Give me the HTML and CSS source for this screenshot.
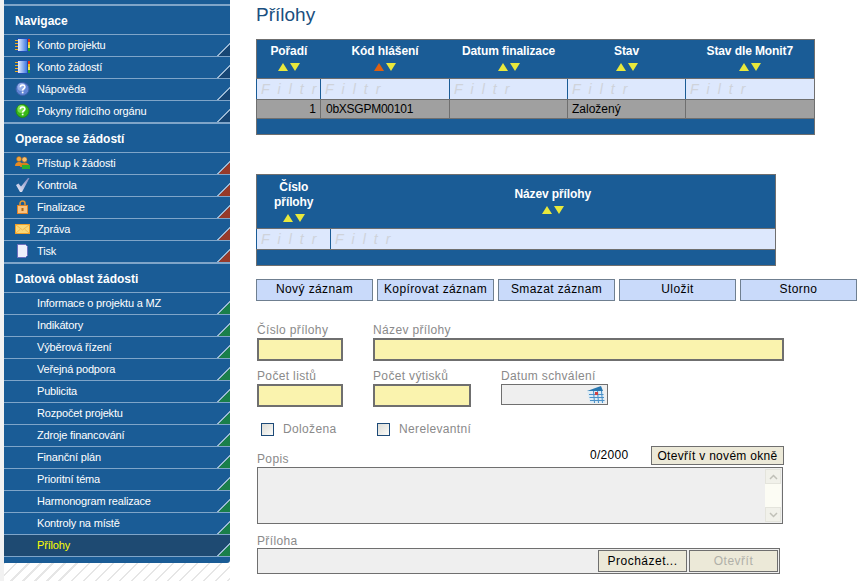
FILE: index.html
```html
<!DOCTYPE html>
<html lang="cs">
<head>
    <meta charset="UTF-8">
    <title>Přílohy</title>
    <link rel="stylesheet" href="styles.css">
</head>
<body>
    <svg class="defs" width="0" height="0">
        <defs>
            <linearGradient id="book-fill" x1="0" y1="0" x2="1" y2="0">
                <stop offset="0" stop-color="#e4edfd"/>
                <stop offset="1" stop-color="#3f78e0"/>
            </linearGradient>
            <linearGradient id="check-fill" x1="0" y1="1" x2="1" y2="0">
                <stop offset="0" stop-color="#eef0fa"/>
                <stop offset="1" stop-color="#7f88c0"/>
            </linearGradient>
        </defs>
        <symbol id="ic-book" viewBox="0 0 15 14">
            <rect x="2" y="0" width="11" height="14" fill="#1f4fb0"/>
            <rect x="3" y="1" width="9" height="12" fill="url(#book-fill)"/>
            <path d="M0 2.500h3M0 5.500h3M0 8.500h3M0 11.500h3" stroke="#f0b020"/>
            <rect x="13" y="1" width="2" height="3" fill="#e03020"/>
            <rect x="13" y="4" width="2" height="3" fill="#f0c020"/>
            <rect x="13" y="7" width="2" height="3" fill="#f0e060"/>
            <rect x="13" y="10" width="2" height="3" fill="#20a030"/>
        </symbol>
        <symbol id="ic-help" viewBox="0 0 15 14">
            <circle cx="7.500" cy="7" r="6.500" fill="#5f84d4" stroke="#3d5fa8"/>
            <circle cx="6.500" cy="5" r="4" fill="#93aee8"/>
            <path d="M5.300 5.200c0-3 4.600-3 4.600-.3 0 1.800-2.300 1.800-2.300 3.600" fill="none" stroke="#fff" stroke-width="1.500"/>
            <rect x="6.800" y="9.600" width="1.700" height="1.700" fill="#fff"/>
        </symbol>
        <symbol id="ic-guide" viewBox="0 0 15 14">
            <circle cx="7.500" cy="7" r="6.500" fill="#38b818" stroke="#238a10"/>
            <circle cx="6.500" cy="5" r="4" fill="#80e050"/>
            <path d="M5.300 5.200c0-3 4.600-3 4.600-.3 0 1.800-2.300 1.800-2.300 3.600" fill="none" stroke="#fff" stroke-width="1.500"/>
            <rect x="6.800" y="9.600" width="1.700" height="1.700" fill="#fff"/>
        </symbol>
        <symbol id="ic-users" viewBox="0 0 15 14">
            <circle cx="4" cy="3" r="2.500" fill="#f4a53a" stroke="#a86010" stroke-width=".5"/>
            <path d="M0 10c0-3 2-4 4-4s4 1 4 4z" fill="#e88a20"/>
            <circle cx="9.500" cy="3.500" r="2.500" fill="#f7c070" stroke="#a86010" stroke-width=".5"/>
            <path d="M5 11c0-3 2-4.500 4.500-4.500S14 8 14 9v2z" fill="#d8801c"/>
            <rect x="7" y="9" width="8" height="4" fill="#28b030"/>
        </symbol>
        <symbol id="ic-check" viewBox="0 0 15 14">
            <path d="M1 7l2.500-1.500L6 8.500 13 0h1.500L7 14H5z" fill="url(#check-fill)"/>
        </symbol>
        <symbol id="ic-lock" viewBox="0 0 15 14">
            <path d="M5 6V3.500a2.500 2.500 0 0 1 5 0V6" fill="none" stroke="#e09838" stroke-width="1.500"/>
            <rect x="2.500" y="5.500" width="10" height="8" fill="#f9c27e" stroke="#e08428"/>
            <rect x="6.500" y="8" width="2" height="3" fill="#b06818"/>
        </symbol>
        <symbol id="ic-mail" viewBox="0 0 15 14">
            <rect x=".5" y="2.500" width="14" height="9" fill="#fbd878" stroke="#f0a028"/>
            <path d="M1 3l6.500 5L14 3M1 11l4.500-4M14 11L9.500 7" fill="none" stroke="#f0b850"/>
        </symbol>
        <symbol id="ic-doc" viewBox="0 0 15 14">
            <path d="M2.500.5h8l2 2v9l-2 2h-8z" fill="#eef0fb" stroke="#6f70c0"/>
        </symbol>
    </svg>

    <div class="page">
        <nav class="side">
            <div class="side-cap"></div>

            <h3 class="side-title">Navigace</h3>
            <a class="side-item tri-blue"><svg class="ic"><use href="#ic-book"/></svg>Konto projektu</a>
            <a class="side-item tri-blue"><svg class="ic"><use href="#ic-book"/></svg>Konto žádostí</a>
            <a class="side-item tri-blue"><svg class="ic"><use href="#ic-help"/></svg>Nápověda</a>
            <a class="side-item tri-blue last"><svg class="ic"><use href="#ic-guide"/></svg>Pokyny řídícího orgánu</a>

            <h3 class="side-title">Operace se žádostí</h3>
            <a class="side-item tri-red"><svg class="ic"><use href="#ic-users"/></svg>Přístup k žádosti</a>
            <a class="side-item tri-red"><svg class="ic"><use href="#ic-check"/></svg>Kontrola</a>
            <a class="side-item tri-red"><svg class="ic"><use href="#ic-lock"/></svg>Finalizace</a>
            <a class="side-item tri-red"><svg class="ic"><use href="#ic-mail"/></svg>Zpráva</a>
            <a class="side-item tri-red last"><svg class="ic"><use href="#ic-doc"/></svg>Tisk</a>

            <h3 class="side-title">Datová oblast žádosti</h3>
            <a class="side-item tri-green plain">Informace o projektu a MZ</a>
            <a class="side-item tri-green plain">Indikátory</a>
            <a class="side-item tri-green plain">Výběrová řízení</a>
            <a class="side-item tri-green plain">Veřejná podpora</a>
            <a class="side-item tri-green plain">Publicita</a>
            <a class="side-item tri-green plain">Rozpočet projektu</a>
            <a class="side-item tri-green plain">Zdroje financování</a>
            <a class="side-item tri-green plain">Finanční plán</a>
            <a class="side-item tri-green plain">Prioritní téma</a>
            <a class="side-item tri-green plain">Harmonogram realizace</a>
            <a class="side-item tri-green plain">Kontroly na místě</a>
            <a class="side-item tri-green plain active">Přílohy</a>
            <div class="side-foot"></div>
        </nav>

        <main class="content">
            <h1 class="title">Přílohy</h1>

            <table class="grid grid-top">
                <colgroup>
                    <col class="c-64"><col class="c-129"><col class="c-118"><col class="c-118"><col>
                </colgroup>
                <tr class="head">
                    <th>Pořadí<div class="sort"><i class="up"></i><i class="down"></i></div></th>
                    <th>Kód hlášení<div class="sort"><i class="up on"></i><i class="down"></i></div></th>
                    <th>Datum finalizace<div class="sort"><i class="up"></i><i class="down"></i></div></th>
                    <th>Stav<div class="sort"><i class="up"></i><i class="down"></i></div></th>
                    <th>Stav dle Monit7<div class="sort"><i class="up"></i><i class="down"></i></div></th>
                </tr>
                <tr class="filter">
                    <td>Filtr</td><td>Filtr</td><td>Filtr</td><td>Filtr</td><td>Filtr</td>
                </tr>
                <tr class="row">
                    <td class="num">1</td><td class="code">0bXSGPM00101</td><td></td><td>Založený</td><td></td>
                </tr>
                <tr class="foot"><td colspan="5"></td></tr>
            </table>

            <table class="grid grid-bottom">
                <colgroup>
                    <col class="c-74"><col>
                </colgroup>
                <tr class="head head-tall">
                    <th>Číslo<br>přílohy<div class="sort"><i class="up"></i><i class="down"></i></div></th>
                    <th>Název přílohy<div class="sort"><i class="up"></i><i class="down"></i></div></th>
                </tr>
                <tr class="filter">
                    <td>Filtr</td><td>Filtr</td>
                </tr>
                <tr class="foot"><td colspan="2"></td></tr>
            </table>

            <div class="actions">
                <button class="btn">Nový záznam</button>
                <button class="btn">Kopírovat záznam</button>
                <button class="btn">Smazat záznam</button>
                <button class="btn">Uložit</button>
                <button class="btn">Storno</button>
            </div>

            <div class="form">
                <div class="form-row row-one">
                    <div class="field"><label>Číslo přílohy</label><div class="inp req w-86"></div></div>
                    <div class="field"><label>Název přílohy</label><div class="inp req w-411"></div></div>
                </div>
                <div class="form-row row-two">
                    <div class="field"><label>Počet listů</label><div class="inp req w-86"></div></div>
                    <div class="field"><label>Počet výtisků</label><div class="inp req w-98"></div></div>
                    <div class="field">
                        <label>Datum schválení</label>
                        <div class="inp date">
                            <svg class="cal" viewBox="0 0 20 18">
                                <path d="M1 5l14-5 2 5z" fill="#2a78b0"/>
                                <path d="M1 5h16l2 12H4z" fill="#dcebf5"/>
                                <path d="M3 8.500h14.500M3.500 11.500h14.500M4 14.500h14.500M7.500 5l1 12M11.500 5l1 12M15.500 5l1 12" stroke="#4a90c8"/>
                                <rect x="9" y="6" width="3" height="3" fill="#d04040"/>
                            </svg>
                        </div>
                    </div>
                </div>
                <div class="checks">
                    <label class="check w-116"><span class="box"></span>Doložena</label>
                    <label class="check"><span class="box"></span>Nerelevantní</label>
                </div>
                <div class="popis-head">
                    <label class="popis-label">Popis</label>
                    <span class="count">0/2000</span>
                    <button class="btn-sm">Otevřít v novém okně</button>
                </div>
                <div class="area">
                    <div class="scroll">
                        <span class="sc-btn"><svg width="9" height="6" viewBox="0 0 9 6"><path d="M1 5l3.500-3.500L8 5" fill="none" stroke="#c0c0b8" stroke-width="1.500"/></svg></span>
                        <span class="sc-btn"><svg width="9" height="6" viewBox="0 0 9 6"><path d="M1 1l3.500 3.500L8 1" fill="none" stroke="#c0c0b8" stroke-width="1.500"/></svg></span>
                    </div>
                </div>
                <label class="file-label">Příloha</label>
                <div class="file">
                    <button class="btn-file">Procházet...</button>
                    <button class="btn-file off">Otevřít</button>
                </div>
            </div>
        </main>
    </div>
</body>
</html>
```

FILE: styles.css
```css
body {
    margin: 0;
    font-family: "Liberation Sans", Arial, sans-serif;
    font-size: 12px;
    background: #fff;
    color: #000;
}
.defs {
    display: block;
    height: 0;
}
.page {
    display: flex;
    align-items: stretch;
    height: 581px;
    overflow: hidden;
}

/* left menu */
.side {
    width: 226px;
    flex-shrink: 0;
    border-left: 4px solid #f2f2f2;
    background: repeating-linear-gradient(135deg, #fff 0, #fff 7px, #e6e6e6 7px, #e6e6e6 8.500px);
}
.side-cap {
    height: 4px;
    background: #1a5c96;
    border-bottom: 2px solid #7fa5c9;
}
.side-title {
    margin: 0;
    height: 28px;
    line-height: 30px;
    padding-left: 11px;
    background: #1a5c96;
    color: #fff;
    font-size: 12px;
    font-weight: bold;
    border-bottom: 1px solid #7fa5c9;
}
.side-item {
    display: flex;
    align-items: center;
    box-sizing: content-box;
    height: 19px;
    padding: 0 0 2px 11px;
    color: #fff;
    font-size: 11px;
    letter-spacing: -.17px;
    border-bottom: 1px solid #7fa5c9;
    background-color: #1a5c96;
    background-repeat: no-repeat;
    background-position: right bottom;
    background-size: 13px 13px;
}
.side-item.plain {
    padding-left: 33px;
}
.side-item.last {
    border-bottom-width: 2px;
}
.side-item.active {
    background-color: #1e4a72;
    color: #ffff00;
}
.tri-blue {
    background-image: linear-gradient(135deg, transparent 48%, #9ab8d4 48%, #9ab8d4 54%, #174674 54%);
}
.tri-red {
    background-image: linear-gradient(135deg, transparent 48%, #9ab8d4 48%, #9ab8d4 54%, #963a2a 54%);
}
.tri-green {
    background-image: linear-gradient(135deg, transparent 48%, #9ab8d4 48%, #9ab8d4 54%, #1a7f4a 54%);
}
.ic {
    width: 15px;
    height: 14px;
    margin-right: 7px;
    flex-shrink: 0;
}
.side-foot {
    height: 6px;
    background: #1a5c96;
    border-bottom-right-radius: 3px;
}

/* main area */
.content {
    flex: 1;
    padding-left: 26px;
    min-width: 0;
}
.title {
    margin: 4px 0 0;
    height: 35px;
    font-size: 19px;
    font-weight: normal;
    line-height: 22px;
    color: #1a4f80;
}
.grid {
    border-collapse: collapse;
    table-layout: fixed;
    border: 1px solid #6f6f6f;
}
.grid-top {
    width: 559px;
}
.grid-bottom {
    width: 520px;
    margin-top: 39px;
}
.c-64 { width: 64px; }
.c-129 { width: 129px; }
.c-118 { width: 118px; }
.c-74 { width: 74px; }
.head th {
    height: 35px;
    padding: 0 0 3px;
    background: #1a5c96;
    color: #fff;
    font-size: 12px;
    font-weight: bold;
    letter-spacing: -.1px;
    line-height: 15px;
    text-align: center;
    vertical-align: middle;
}
.head-tall th {
    height: 51px;
    padding-bottom: 2px;
}
.sort {
    display: flex;
    justify-content: center;
    gap: 2px;
    height: 8px;
    margin-top: 4px;
}
.up, .down {
    display: block;
    width: 0;
    height: 0;
    border-left: 5px solid transparent;
    border-right: 5px solid transparent;
}
.up { border-bottom: 8px solid #e8e83c; }
.down { border-top: 8px solid #e8e83c; }
.up.on { border-bottom-color: #e06010; }
.filter td {
    height: 20px;
    padding: 0 0 0 4px;
    background: #dde8fd;
    border-left: 1px solid #1a5c96;
    border-bottom: 1px solid #6f6f6f;
    border-top: 1px solid #6f6f6f;
    color: #cfd3da;
    font-size: 14px;
    font-style: italic;
    letter-spacing: 8px;
    white-space: nowrap;
}
.row td {
    height: 18px;
    padding: 0 4px;
    background: #a0a0a0;
    border-left: 1px solid #6f6f6f;
    border-bottom: 1px solid #6f6f6f;
    font-size: 12px;
}
.row .num {
    text-align: right;
}
.row .code {
    padding-left: 5px;
    letter-spacing: -.25px;
}
.foot td {
    height: 15px;
    padding: 0;
    background: #1a5c96;
}

/* buttons */
.actions {
    display: flex;
    gap: 4px;
    margin-top: 13px;
}
.btn {
    width: 117px;
    height: 22px;
    padding: 0 0 2px;
    font-family: inherit;
    font-size: 12px;
    letter-spacing: .4px;
    color: #000;
    background: #c9dafa;
    border: 1px solid #6f7f90;
}

/* form */
.form {
    padding-left: 1px;
    color: #8a8a8a;
}
.form label {
    display: block;
    letter-spacing: .35px;
    line-height: 14px;
}
.form-row {
    display: flex;
    gap: 30px;
}
.row-one {
    margin-top: 22px;
}
.row-two {
    margin-top: 8px;
}
.inp {
    box-sizing: border-box;
    height: 23px;
    margin-top: 1px;
}
.req {
    background: #faf3ae;
    border: 2px solid #6f6f6f;
}
.w-86 { width: 86px; }
.w-98 { width: 98px; }
.w-411 { width: 411px; }
.date {
    display: flex;
    align-items: center;
    justify-content: flex-end;
    width: 107px;
    height: 21px;
    padding-right: 1px;
    background: #efefef;
    border: 1px solid #6f6f6f;
}
.cal {
    width: 20px;
    height: 18px;
}
.checks {
    display: flex;
    margin-top: 15px;
    padding-left: 4px;
}
.form .check {
    display: flex;
    align-items: center;
    gap: 9px;
}
.form .w-116 {
    width: 116px;
}
.box {
    box-sizing: border-box;
    width: 13px;
    height: 13px;
    border: 1px solid #1d4a78;
    background: linear-gradient(135deg, #dcdcd6, #fbfbf9);
}
.popis-head {
    display: flex;
    align-items: flex-end;
    width: 527px;
    height: 19px;
    margin-top: 10px;
}
.form .popis-label {
    flex: 0 0 333px;
    margin-bottom: -1px;
}
.count {
    flex: 1;
    color: #000;
    letter-spacing: .3px;
    line-height: 18px;
    align-self: flex-start;
}
.btn-sm {
    box-sizing: border-box;
    width: 133px;
    height: 19px;
    padding: 0;
    font-family: inherit;
    font-size: 12px;
    letter-spacing: .3px;
    color: #000;
    background: #ece9d8;
    border: 1px solid #6f6f6f;
}
.area {
    display: flex;
    justify-content: flex-end;
    box-sizing: border-box;
    width: 526px;
    height: 57px;
    margin-top: 2px;
    padding: 1px;
    background: #efefef;
    border: 1px solid #6f6f6f;
}
.scroll {
    display: flex;
    flex-direction: column;
    justify-content: space-between;
    width: 16px;
    background: #fcfcf4;
}
.sc-btn {
    display: flex;
    align-items: center;
    justify-content: center;
    height: 15px;
    background: #f1f1ea;
    border: 1px solid #e4e4dc;
    box-sizing: border-box;
}
.form .file-label {
    margin-top: 10px;
}
.file {
    display: flex;
    justify-content: flex-end;
    align-items: center;
    gap: 2px;
    box-sizing: border-box;
    width: 523px;
    height: 26px;
    padding-right: 1px;
    background: #efefef;
    border: 1px solid #6f6f6f;
}
.btn-file {
    width: 89px;
    height: 22px;
    padding: 0;
    font-family: inherit;
    font-size: 12px;
    letter-spacing: .5px;
    color: #000;
    background: #ece9d8;
    border: 1px solid #6f6f6f;
}
.btn-file.off {
    color: #b0b0a8;
}
```
